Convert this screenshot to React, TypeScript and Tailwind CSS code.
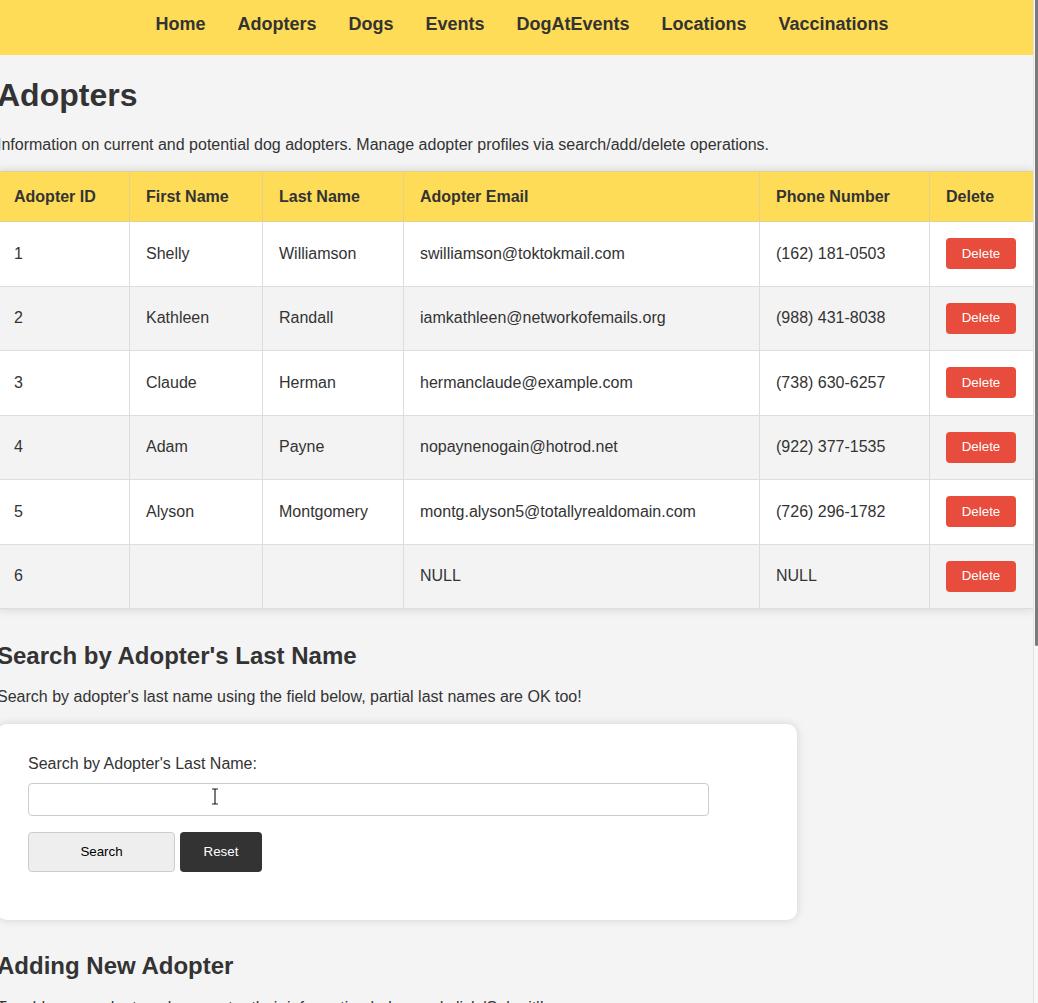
const navLinks = ["Home", "Adopters", "Dogs", "Events", "DogAtEvents", "Locations", "Vaccinations"];

type Adopter = {
  id: number;
  first: string;
  last: string;
  email: string;
  phone: string;
};

const adopters: Adopter[] = [
  { id: 1, first: "Shelly", last: "Williamson", email: "swilliamson@toktokmail.com", phone: "(162) 181-0503" },
  { id: 2, first: "Kathleen", last: "Randall", email: "iamkathleen@networkofemails.org", phone: "(988) 431-8038" },
  { id: 3, first: "Claude", last: "Herman", email: "hermanclaude@example.com", phone: "(738) 630-6257" },
  { id: 4, first: "Adam", last: "Payne", email: "nopaynenogain@hotrod.net", phone: "(922) 377-1535" },
  { id: 5, first: "Alyson", last: "Montgomery", email: "montg.alyson5@totallyrealdomain.com", phone: "(726) 296-1782" },
  { id: 6, first: "", last: "", email: "NULL", phone: "NULL" },
];

const headers = ["Adopter ID", "First Name", "Last Name", "Adopter Email", "Phone Number", "Delete"];
const colWidths = ["w-[132px]", "w-[133px]", "w-[141px]", "w-[356px]", "w-[170px]", "w-[104px]"];

export default function App() {
  return (
    <div className="flex h-[1003px] w-[1038px] overflow-hidden bg-[#f4f4f4] font-['Liberation_Sans',Arial,sans-serif] text-[#333]">
      <div className="w-[1033px] shrink-0 overflow-hidden">
        <div className="-ml-[3px] w-[1036px]">
          {/* NAVBAR */}
          <nav className="flex h-[55px] justify-center gap-8 bg-[#ffdc57] pl-[14px] pt-[14px] text-[18px] leading-[21px] font-bold">
            {navLinks.map((l) => (
              <a key={l} href="#" className="text-[#333]">
                {l}
              </a>
            ))}
          </nav>

          <h1 className="mt-[22px] text-[32px] leading-[37px] font-bold">Adopters</h1>
          <p className="mt-[22px] text-[16px] leading-[18px]">
            Information on current and potential dog adopters. Manage adopter profiles via search/add/delete operations.
          </p>

          {/* TABLE */}
          <table className="mt-[17px] w-[1036px] table-fixed border-collapse bg-white text-[16px] shadow-[0_0_10px_rgba(0,0,0,0.14)]">
            <thead>
              <tr className="h-[50px] bg-[#ffdc57]">
                {headers.map((h, i) => (
                  <th key={h} className={`${colWidths[i]} border border-[#e6d08a] px-4 text-left font-bold`}>
                    {h}
                  </th>
                ))}
              </tr>
            </thead>
            <tbody>
              {adopters.map((a, idx) => (
                <tr key={a.id} className={idx % 2 === 1 ? "h-[64.5px] bg-[#f3f3f3]" : "h-[64.5px] bg-white"}>
                  <td className="border border-[#dddddd] px-4">{a.id}</td>
                  <td className="border border-[#dddddd] px-4">{a.first}</td>
                  <td className="border border-[#dddddd] px-4">{a.last}</td>
                  <td className="border border-[#dddddd] px-4">{a.email}</td>
                  <td className="border border-[#dddddd] px-4">{a.phone}</td>
                  <td className="border border-[#dddddd] px-4">
                    <button className="h-[31px] w-[70px] rounded-[4px] bg-[#e74c3c] text-[13.33px] text-white">Delete</button>
                  </td>
                </tr>
              ))}
            </tbody>
          </table>

          {/* SEARCH */}
          <h2 className="mt-[33px] text-[24px] leading-[28px] font-bold">Search by Adopter's Last Name</h2>
          <p className="mt-[18px] text-[16px] leading-[18px]">
            Search by adopter's last name using the field below, partial last names are OK too!
          </p>

          <div className="mt-[18px] w-[800px] rounded-[10px] bg-white px-[31px] pt-[31px] pb-[48px] shadow-[0_0_10px_rgba(0,0,0,0.14)]">
            <label className="block text-[16px] leading-[18px]">Search by Adopter's Last Name:</label>
            <div className="relative mt-[10px] h-[33px] w-[681px]">
              <input className="h-full w-full rounded-[4px] border border-[#cccccc] bg-white px-2 outline-none" />
              <svg className="absolute top-[5px] left-[183px]" width="8" height="17" viewBox="0 0 8 17">
                <path d="M1 1h2.5L4 2l.5-1H7M4 2v13M1 16h2.5L4 15l.5 1H7" fill="none" stroke="#222" strokeWidth="1.2" />
              </svg>
            </div>
            <div className="mt-[16px] flex gap-[5px]">
              <button className="h-[40px] w-[147px] rounded-[4px] border border-[#cccccc] bg-[#eeeeee] text-[13.33px] text-black">
                Search
              </button>
              <button className="h-[40px] w-[82px] rounded-[4px] bg-[#333333] text-[13.33px] text-white">Reset</button>
            </div>
          </div>

          <h2 className="mt-[32px] text-[24px] leading-[28px] font-bold">Adding New Adopter</h2>
          <p className="mt-[19px] text-[16px] leading-[18px]">
            To add a new adopter, please enter their information below and click 'Submit'!
          </p>
        </div>
      </div>

      {/* scrollbar */}
      <div className="flex w-[5px] shrink-0 border-l border-[#e2e2e2] bg-[#f7f7f7] pl-[1px]">
        <div className="h-[646px] w-[3px] rounded-b-full bg-[#7a7a7a]" />
      </div>
    </div>
  );
}
